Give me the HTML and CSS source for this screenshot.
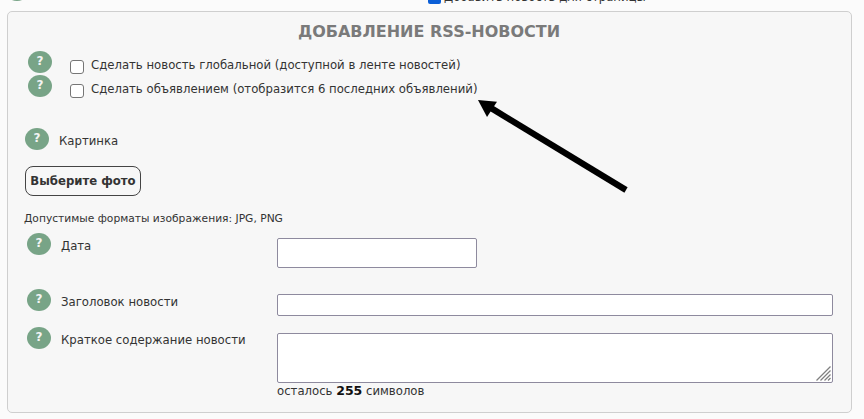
FILE: index.html
```html
<!DOCTYPE html>
<html lang="ru">
<head>
<meta charset="utf-8">
<title>Добавление RSS-новости</title>
<link rel="stylesheet" href="styles.css">
</head>
<body>
<div class="topline">
  <span class="hint hint-top">?</span>
  <label class="top-check"><span class="blue-box"></span>Добавить новость для страницы</label>
</div>
<main class="panel">
  <h2 class="title">ДОБАВЛЕНИЕ RSS-НОВОСТИ</h2>
  <div class="checks">
    <div class="check-row">
      <span class="hint">?</span>
      <label class="check-label"><input type="checkbox" class="box">Сделать новость глобальной (доступной в ленте новостей)</label>
    </div>
    <div class="check-row">
      <span class="hint">?</span>
      <label class="check-label"><input type="checkbox" class="box">Сделать объявлением (отобразится 6 последних объявлений)</label>
    </div>
  </div>
  <div class="picture-row"><span class="hint">?</span><span class="picture-label">Картинка</span></div>
  <button class="photo-btn" type="button">Выберите фото</button>
  <p class="formats">Допустимые форматы изображения: JPG, PNG</p>
  <div class="field field-date">
    <div class="field-label"><span class="hint">?</span><span>Дата</span></div>
    <input class="input date-input" type="text">
  </div>
  <div class="field field-head">
    <div class="field-label"><span class="hint">?</span><span>Заголовок новости</span></div>
    <input class="input head-input" type="text">
  </div>
  <div class="field field-text">
    <div class="field-label"><span class="hint">?</span><span>Краткое содержание новости</span></div>
    <div class="field-main">
      <div class="text-wrap">
        <textarea class="input text-input"></textarea>
        <svg class="grip" width="15" height="15" viewBox="0 0 15 15" aria-hidden="true">
          <path d="M0.5 14.5 L14.5 0.5 M4.5 14.5 L14.5 4.5 M8.5 14.5 L14.5 8.5 M12 14.5 L14.5 12" stroke="#808080" stroke-width="1.3" fill="none"/>
        </svg>
      </div>
      <div class="remain">осталось <b>255</b> символов</div>
    </div>
  </div>
  <svg class="arrow" width="170" height="110" viewBox="0 0 170 110" aria-hidden="true">
    <path d="M150 91 L15 9" stroke="#000" stroke-width="6.2" fill="none"/>
    <path d="M2 1 L21 2.7 L11 18 Z" fill="#000"/>
  </svg>
</main>
</body>
</html>
```
FILE: styles.css
```css
* { box-sizing: border-box; }
html, body { margin: 0; padding: 0; }
body {
  width: 864px;
  height: 419px;
  overflow: hidden;
  background: #fbfbfb;
  font-family: "DejaVu Sans", Verdana, sans-serif;
  font-size: 11.7px;
  color: #333;
}
.topline { height: 11px; position: relative; overflow: hidden; }
.hint-top { position: absolute; left: 5px; top: -21px; }
.top-check {
  position: absolute;
  left: 428px;
  top: -10px;
  display: flex;
  align-items: center;
  gap: 3px;
  white-space: nowrap;
  line-height: 14px;
}
.blue-box { width: 13px; height: 13px; background: #0b5fd7; border-radius: 2px; }
.panel {
  position: relative;
  width: 845px;
  height: 402px;
  margin-left: 7px;
  background: #f7f7f7;
  border: 1px solid #cfcfcf;
  border-radius: 5px;
  padding: 0 18px 0 17px;
}
.title {
  margin: 10px 0 0;
  text-align: center;
  font-size: 16px;
  line-height: 20px;
  font-weight: bold;
  color: #7a7a7a;
  height: 20px;
}
.hint {
  flex: none;
  width: 24px;
  height: 22px;
  border-radius: 50%;
  background: #78a487;
  color: #f4f4f4;
  font: bold 12px/20px "DejaVu Sans", sans-serif;
  text-align: center;
  display: inline-block;
}
.checks { margin-top: 9px; padding-left: 3px; }
.check-row { display: flex; height: 24px; }
.check-label { display: flex; align-items: center; height: 22px; margin-left: 18px; padding-top: 5px; white-space: nowrap; }
.box { width: 14px; height: 14px; margin: 5px 7px 0 0; appearance: none; background: #fff; border: 1px solid #767676; border-radius: 3px; }
.picture-row { display: flex; align-items: center; margin-top: 29px; height: 22px; }
.picture-label { margin-left: 10px; padding-top: 3px; }
.photo-btn {
  display: block;
  margin-top: 16px;
  width: 116px;
  height: 30px;
  padding: 0;
  background: #f7f7f7;
  border: 1px solid #444;
  border-radius: 8px;
  font: bold 11.7px "DejaVu Sans", sans-serif;
  color: #333;
}
.formats { margin: 16px 0 0 -1px; font-size: 10.7px; line-height: 14px; height: 14px; color: #333; }
.field { display: flex; padding-left: 2px; }
.field-label { width: 250px; display: flex; flex: none; }
.field-label span:last-child { margin-left: 10px; padding-top: 6px; white-space: nowrap; }
.field-date { margin-top: 7px; height: 50px; }
.field-head { margin-top: 6px; height: 38px; }
.input { display: block; background: #fff; border: 1px solid #8e8a9e; border-radius: 2px; margin: 0; padding: 0; }
.date-input { width: 200px; height: 30px; margin-top: 5px; }
.head-input { width: 556px; height: 22px; margin-top: 5px; }
.text-wrap { position: relative; margin-top: 6px; }
.text-input { width: 556px; height: 50px; resize: none; }
.grip { position: absolute; right: 2px; bottom: 2px; }
.remain { margin-top: 0; line-height: 16px; }
.remain b { color: #111; font-size: 12.5px; }
.arrow { position: absolute; left: 468px; top: 87px; }
```
